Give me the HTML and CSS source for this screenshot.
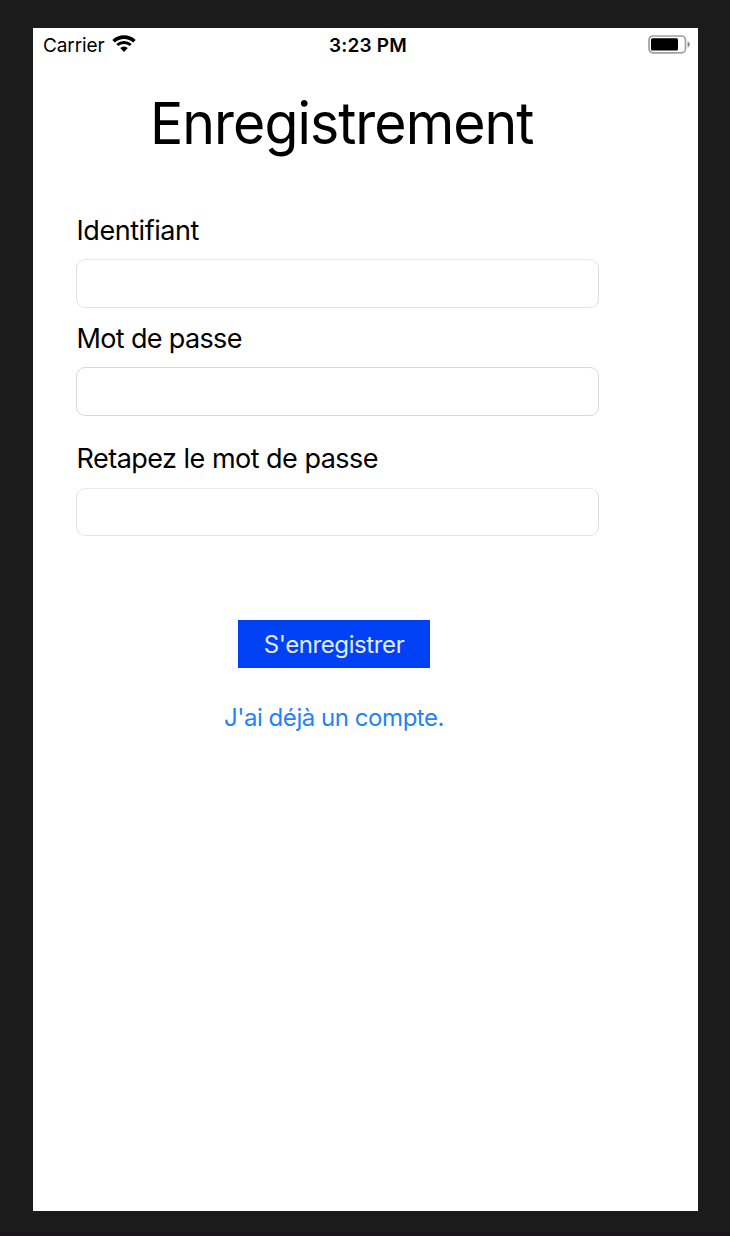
FILE: index.html
```html
<!DOCTYPE html>
<html lang="fr">
<head>
<meta charset="utf-8">
<title>Enregistrement</title>
<link rel="stylesheet" href="styles.css">
</head>
<body>
<main class="screen">
  <header class="status">
    <div class="carrier"><span class="carrier-name">Carrier</span>
      <svg class="wifi" width="24" height="17" viewBox="0 0 24 17">
        <path d="M1.6 6.2A15.2 15.2 0 0 1 22.4 6.2" fill="none" stroke="#000" stroke-width="3.6"/>
        <path d="M5.3 10A10 10 0 0 1 18.7 10" fill="none" stroke="#000" stroke-width="3"/>
        <path d="M8.2 13.1A5.2 5.2 0 0 1 15.8 13.1L12 16.9Z"/>
      </svg>
    </div>
    <span class="time">3:23 PM</span>
    <svg class="battery" width="43" height="19" viewBox="0 0 43 19">
      <rect x="1" y="1" width="36.5" height="16.8" rx="4" fill="none" stroke="#a0a0a0" stroke-width="1.7"/>
      <rect x="3" y="3.2" width="27" height="12.4" rx="1.5"/>
      <path d="M39.6 6.3Q41.8 7.4 41.8 9.4T39.6 12.5Z" fill="#858585"/>
    </svg>
  </header>
  <h1 class="title"><span class="title-text">Enregistrement</span></h1>
  <form class="form">
    <label class="label label-id" for="user"><span>Identifiant</span></label>
    <input class="field" id="user" type="text">
    <label class="label label-pass" for="pass"><span>Mot de passe</span></label>
    <input class="field field-strong" id="pass" type="password">
    <label class="label label-again" for="again"><span>Retapez le mot de passe</span></label>
    <input class="field field-last" id="again" type="password">
    <div class="actions">
      <button class="submit" type="button"><span>S'enregistrer</span></button>
      <a class="login"><span>J'ai déjà un compte.</span></a>
    </div>
  </form>
</main>
</body>
</html>
```
FILE: styles.css
```css
* { box-sizing: border-box; }
body {
  margin: 0;
  height: 1236px;
  padding: 28px 32px 25px 33px;
  background: linear-gradient(#1b1b1b 1232px, #1b141c 1232px);
  font-family: Inter, "Liberation Sans", sans-serif;
  color: #000;
}
.screen { height: 1183px; background: #fff; }
.status {
  display: grid;
  grid-template-columns: 1fr auto 1fr;
  align-items: center;
  height: 34px;
  padding: 0 7px 0 10px;
}
.carrier { display: flex; align-items: center; gap: 7px; }
.carrier-name { font-size: 19px; letter-spacing: -0.1px; }
.wifi { margin-top: -3px; }
.time { margin-left: 2px; font-size: 19px; font-weight: 600; letter-spacing: 0.2px; }
.battery { justify-self: end; margin-top: -2px; }
.title {
  margin: 26px 0 0 117px;
  font-size: 58px;
  line-height: 70px;
  font-weight: 400;
  letter-spacing: -1px;
}
.title-text { display: inline-block; transform: scaleX(0.955); transform-origin: left; }
.form { display: flex; flex-direction: column; margin-left: 43px; width: 523px; }
.label { padding-left: 0.5px; font-size: 27px; line-height: 36px; letter-spacing: -0.52px; }
.label-id { margin-top: 55px; letter-spacing: -0.45px; }
.label-pass { margin-top: 13px; letter-spacing: -0.65px; }
.label-again { margin-top: 25px; }
.field {
  height: 49px;
  margin: 10px 0 0;
  padding: 0 12px;
  border: 1px solid #dedede;
  border-top-color: #e8e8e8;
  border-bottom-color: #e4e4e4;
  border-radius: 9px;
  background: #fff;
  font: inherit;
  font-size: 24px;
}
.field-strong { border-color: #d9d9d9; }
.field-last { height: 48px; margin-top: 11px; }
.actions { display: flex; flex-direction: column; align-items: center; width: 516px; margin-top: 84px; }
.submit {
  width: 192px;
  height: 48px;
  padding: 0;
  border: 0;
  background: #0041f5;
  color: #e4e9fb;
  font: inherit;
  font-size: 24px;
  letter-spacing: -0.4px;
  white-space: nowrap;
}
.login { margin-top: 34px; font-size: 24px; line-height: 32px; letter-spacing: -0.45px; color: #2482f7; white-space: nowrap; }
```
